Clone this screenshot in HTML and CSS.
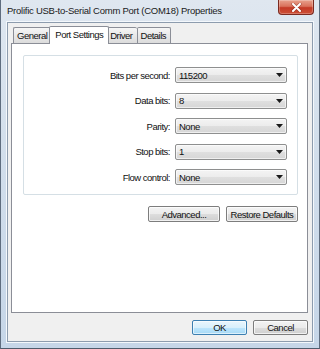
FILE: index.html
```html
<!DOCTYPE html>
<html>
<head>
<meta charset="utf-8">
<link rel="stylesheet" href="styles.css">
</head>
<body>
<div class="window">
  <div class="titlebar">
    <span class="title">Prolific USB-to-Serial Comm Port (COM18) Properties</span>
    <div class="close">
      <svg width="11" height="9" viewBox="0 0 11 9"><path d="M2 1 L9 8 M9 1 L2 8" stroke="#6a1d16" stroke-width="3.2" stroke-linecap="round" opacity="0.45"/><path d="M2 1 L9 8 M9 1 L2 8" stroke="#ffffff" stroke-width="2" stroke-linecap="round"/></svg>
    </div>
  </div>
  <div class="client">
    <div class="tabs">
      <div class="tab">General</div>
      <div class="tab active">Port Settings</div>
      <div class="tab">Driver</div>
      <div class="tab">Details</div>
    </div>
    <div class="panel">
      <div class="group">
        <div class="fields">
          <span class="label">Bits per second:</span>
          <div class="combo"><span>115200</span><svg class="arrow" width="7" height="4" viewBox="0 0 7 4"><path d="M0 0 H7 L3.5 4 Z" fill="#1a1a1a"/></svg></div>
          <span class="label">Data bits:</span>
          <div class="combo"><span>8</span><svg class="arrow" width="7" height="4" viewBox="0 0 7 4"><path d="M0 0 H7 L3.5 4 Z" fill="#1a1a1a"/></svg></div>
          <span class="label">Parity:</span>
          <div class="combo"><span>None</span><svg class="arrow" width="7" height="4" viewBox="0 0 7 4"><path d="M0 0 H7 L3.5 4 Z" fill="#1a1a1a"/></svg></div>
          <span class="label">Stop bits:</span>
          <div class="combo"><span>1</span><svg class="arrow" width="7" height="4" viewBox="0 0 7 4"><path d="M0 0 H7 L3.5 4 Z" fill="#1a1a1a"/></svg></div>
          <span class="label">Flow control:</span>
          <div class="combo"><span>None</span><svg class="arrow" width="7" height="4" viewBox="0 0 7 4"><path d="M0 0 H7 L3.5 4 Z" fill="#1a1a1a"/></svg></div>
        </div>
      </div>
      <div class="panel-actions">
        <button class="btn wide">Advanced...</button>
        <button class="btn wide">Restore Defaults</button>
      </div>
    </div>
    <div class="dialog-actions">
      <button class="btn default">OK</button>
      <button class="btn">Cancel</button>
    </div>
  </div>
</div>
</body>
</html>
```
FILE: styles.css
```css
* { box-sizing: border-box; }
html, body { margin: 0; padding: 0; }
body {
  width: 320px;
  height: 349px;
  overflow: hidden;
  font-family: "Liberation Sans", Arial, sans-serif;
  font-size: 9.5px;
  letter-spacing: -0.5px;
  color: #111;
}
.window {
  width: 320px;
  height: 349px;
  display: flex;
  flex-direction: column;
  background: linear-gradient(to bottom, #dfe7f0 0%, #d3dfec 40%, #c6d6e8 100%);
  border-left: 1px solid #5f6d7f;
  border-right: 1px solid #5f6d7f;
  border-bottom: 1px solid #4f5c6c;
}
.titlebar {
  height: 22px;
  flex: none;
  display: flex;
  justify-content: space-between;
  align-items: flex-start;
}
.title {
  padding-left: 6px;
  line-height: 22px;
  font-size: 9.5px;
  letter-spacing: -0.25px;
  color: #1a1a1a;
}
.close {
  width: 36px;
  height: 15px;
  margin-right: 5px;
  border: 1px solid #7a2a20;
  border-top: none;
  border-radius: 0 0 4px 4px;
  background: linear-gradient(to bottom, #e8a18d 0%, #d9725c 45%, #c43a26 55%, #cc4f36 100%);
  display: flex;
  align-items: center;
  justify-content: center;
  box-shadow: inset 0 0 0 1px rgba(255,255,255,0.25);
}
.client {
  flex: 1;
  margin: 0 6px 6px 6px;
  background: #f0f0f0;
  border: 1px solid #8d9cae;
  box-shadow: 0 0 0 1px #f4f8fc;
  display: flex;
  flex-direction: column;
  padding-top: 3px;
}
.tabs {
  height: 18px;
  display: flex;
  align-items: flex-end;
  padding-left: 5px;
  position: relative;
  z-index: 1;
}
.tab {
  height: 16px;
  padding: 0 4px 0 3px;
  display: flex;
  align-items: center;
  border: 1px solid #8b8e97;
  border-bottom: none;
  border-right: none;
  border-radius: 2px 2px 0 0;
  background: linear-gradient(to bottom, #f6f6f6 0%, #e8e8e8 50%, #dcdcdc 100%);
  margin-bottom: 1px;
}
.tab:nth-child(4) { border-right: 1px solid #8b8e97; }
.tab.active {
  height: 18px;
  margin: 0 -2px 0 -2px;
  padding: 0 5px 2px 5px;
  background: #fff;
  border: 1px solid #8b8e97;
  border-bottom: none;
  position: relative;
  z-index: 2;
}
.tab.active + .tab { border-left: none; }
.panel {
  height: 270px;
  flex: none;
  margin: -1px 4px 0 3px;
  background: #fff;
  border: 1px solid #8b8e97;
  padding: 11px 9px 0 11px;
}
.group {
  border: 1px solid #d5dfe5;
  border-radius: 2px;
  padding: 11px 9px 9px 0;
}
.fields {
  display: grid;
  grid-template-columns: 146px 112px;
  column-gap: 5px;
  row-gap: 9.5px;
  align-items: center;
}
.label {
  text-align: right;
}
.combo {
  height: 16px;
  border: 1px solid #8e8f8f;
  border-radius: 2px;
  background: linear-gradient(to bottom, #f4f4f4 0%, #ececec 50%, #dfdfdf 51%, #d6d6d6 100%);
  display: flex;
  align-items: center;
  justify-content: space-between;
  padding: 0 3px 0 3px;
  box-shadow: inset 0 0 0 1px rgba(255,255,255,0.6);
}
.arrow { flex: none; }
.panel-actions {
  display: flex;
  justify-content: flex-end;
  gap: 6px;
  margin-top: 11px;
}
.btn {
  font-family: inherit;
  font-size: inherit;
  letter-spacing: inherit;
  color: #111;
  height: 15px;
  width: 55px;
  padding: 0;
  border: 1px solid #7d7d7d;
  border-radius: 2px;
  background: linear-gradient(to bottom, #f3f3f3 0%, #ebebeb 50%, #dddddd 51%, #cfcfcf 100%);
  box-shadow: inset 0 0 0 1px rgba(255,255,255,0.7);
  line-height: 13px;
}
.btn.wide { width: 72px; height: 16px; }
.btn.default {
  border-color: #3c7fb1;
  background: linear-gradient(to bottom, #eaf6fd 0%, #d9f0fc 50%, #bee6fd 51%, #a7d9f5 100%);
  box-shadow: inset 0 0 0 1px rgba(255,255,255,0.6);
}
.dialog-actions {
  display: flex;
  justify-content: flex-end;
  gap: 6px;
  padding: 7px 4px 0 0;
}
```
